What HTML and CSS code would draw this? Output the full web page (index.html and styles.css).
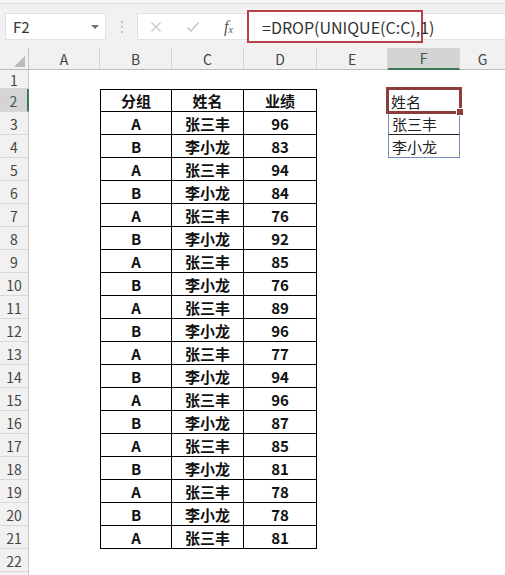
FILE: index.html
```html
<!DOCTYPE html>
<html lang="zh-CN">
<head>
<meta charset="utf-8">
<title>DROP UNIQUE</title>
<link rel="stylesheet" href="styles.css">
</head>
<body>
<div class="ribbon-edge"></div>
<div class="toolbar">
  <div class="namebox"><span class="nb-text">F2</span><span class="nb-arrow"></span></div>
  <div class="dots"><i></i><i></i><i></i></div>
  <div class="fbar">
    <div class="fbtns">
      <svg class="ico" width="12" height="12" viewBox="0 0 12 12"><path d="M1.5 1.5 L10.5 10.5 M10.5 1.5 L1.5 10.5" stroke="#c8c8c8" stroke-width="1.4" fill="none"/></svg>
      <svg class="ico" width="14" height="12" viewBox="0 0 14 12"><path d="M1.5 6.5 L5 10 L12.5 1.5" stroke="#c8c8c8" stroke-width="1.6" fill="none"/></svg>
      <span class="fx">f<sub>x</sub></span>
    </div>
    <div class="finput">=DROP(UNIQUE(C:C),1)</div>
  </div>
</div>

<div class="sheet">
  <div class="corner"><span class="tri"></span></div>
  <div class="ch">A</div><div class="ch">B</div><div class="ch">C</div><div class="ch">D</div><div class="ch">E</div><div class="ch sel">F</div><div class="ch last">G</div>

  <div class="rh">1</div><div></div><div></div><div></div><div></div><div></div><div></div><div></div>

  <div class="rh sel">2</div><div></div><div class="t l top">分组</div><div class="t top">姓名</div><div class="t top">业绩</div><div></div><div class="f active">姓名</div><div></div>

  <div class="rh">3</div><div></div><div class="t l">A</div><div class="t">张三丰</div><div class="t">96</div><div></div><div class="f spill mid">张三丰</div><div></div>
  <div class="rh">4</div><div></div><div class="t l">B</div><div class="t">李小龙</div><div class="t">83</div><div></div><div class="f spill end">李小龙</div><div></div>
  <div class="rh">5</div><div></div><div class="t l">A</div><div class="t">张三丰</div><div class="t">94</div><div></div><div></div><div></div>
  <div class="rh">6</div><div></div><div class="t l">B</div><div class="t">李小龙</div><div class="t">84</div><div></div><div></div><div></div>
  <div class="rh">7</div><div></div><div class="t l">A</div><div class="t">张三丰</div><div class="t">76</div><div></div><div></div><div></div>
  <div class="rh">8</div><div></div><div class="t l">B</div><div class="t">李小龙</div><div class="t">92</div><div></div><div></div><div></div>
  <div class="rh">9</div><div></div><div class="t l">A</div><div class="t">张三丰</div><div class="t">85</div><div></div><div></div><div></div>
  <div class="rh">10</div><div></div><div class="t l">B</div><div class="t">李小龙</div><div class="t">76</div><div></div><div></div><div></div>
  <div class="rh">11</div><div></div><div class="t l">A</div><div class="t">张三丰</div><div class="t">89</div><div></div><div></div><div></div>
  <div class="rh">12</div><div></div><div class="t l">B</div><div class="t">李小龙</div><div class="t">96</div><div></div><div></div><div></div>
  <div class="rh">13</div><div></div><div class="t l">A</div><div class="t">张三丰</div><div class="t">77</div><div></div><div></div><div></div>
  <div class="rh">14</div><div></div><div class="t l">B</div><div class="t">李小龙</div><div class="t">94</div><div></div><div></div><div></div>
  <div class="rh">15</div><div></div><div class="t l">A</div><div class="t">张三丰</div><div class="t">96</div><div></div><div></div><div></div>
  <div class="rh">16</div><div></div><div class="t l">B</div><div class="t">李小龙</div><div class="t">87</div><div></div><div></div><div></div>
  <div class="rh">17</div><div></div><div class="t l">A</div><div class="t">张三丰</div><div class="t">85</div><div></div><div></div><div></div>
  <div class="rh">18</div><div></div><div class="t l">B</div><div class="t">李小龙</div><div class="t">81</div><div></div><div></div><div></div>
  <div class="rh">19</div><div></div><div class="t l">A</div><div class="t">张三丰</div><div class="t">78</div><div></div><div></div><div></div>
  <div class="rh">20</div><div></div><div class="t l">B</div><div class="t">李小龙</div><div class="t">78</div><div></div><div></div><div></div>
  <div class="rh">21</div><div></div><div class="t l">A</div><div class="t">张三丰</div><div class="t">81</div><div></div><div></div><div></div>
  <div class="rh">22</div><div></div><div></div><div></div><div></div><div></div><div></div><div></div>
  <div class="rh"></div><div></div><div></div><div></div><div></div><div></div><div></div><div></div>
</div>
</body>
</html>
```

FILE: styles.css
```css
* { box-sizing: border-box; }
html, body { margin: 0; padding: 0; }
body {
  width: 505px;
  height: 575px;
  overflow: hidden;
  background: #ffffff;
  font-family: "Noto Sans CJK SC", "Noto Sans", sans-serif;
  color: #222;
}

.ribbon-edge {
  height: 4px;
  background: #f7f7f7;
  border-bottom: 1px solid #d9d9d9;
}

.toolbar {
  height: 44px;
  background: #f1f1f1;
  display: flex;
  align-items: flex-start;
  padding-top: 9px;
}

.namebox {
  margin-left: 5px;
  width: 101px;
  height: 27px;
  background: #fff;
  border: 1px solid #e2e2e2;
  display: flex;
  align-items: center;
  justify-content: space-between;
  padding: 0 6px 0 7px;
}
.nb-text { font-size: 15px; color: #333; line-height: 1; }
.nb-arrow {
  width: 0; height: 0;
  border-left: 4px solid transparent;
  border-right: 4px solid transparent;
  border-top: 4px solid #707070;
}

.dots {
  width: 31px;
  height: 27px;
  display: flex;
  flex-direction: column;
  align-items: center;
  justify-content: center;
  gap: 3px;
}
.dots i {
  display: block;
  width: 2px; height: 2px;
  background: #c4c4c4;
}

.fbar {
  flex: 1;
  height: 27px;
  background: #fff;
  border: 1px solid #e2e2e2;
  border-right: none;
  display: flex;
  align-items: center;
}
.fbtns {
  width: 109px;
  display: flex;
  align-items: center;
  padding-left: 12px;
  gap: 24px;
}
.ico { display: block; }
.fx {
  font-family: "Liberation Serif", "DejaVu Serif", serif;
  font-style: italic;
  font-size: 16px;
  color: #555;
  margin-left: 0;
  line-height: 1;
}
.fx sub { font-size: 10px; vertical-align: -1px; }

.finput {
  width: 176px;
  height: 33px;
  margin: -3px 0;
  border: 2px solid #b5424b;
  display: flex;
  align-items: center;
  padding-left: 13px;
  font-size: 16px;
  color: #333;
  background: #fff;
}

.sheet {
  display: grid;
  grid-template-columns: 29px 71px 72px 72px 73px 71px 72px 1fr;
  grid-template-rows: 22px 19px repeat(21, 23px) 23px;
}

.corner {
  background: #f1f1f1;
  border-right: 1px solid #c6c6c6;
  border-bottom: 1px solid #bdbdbd;
  display: flex;
  align-items: flex-end;
  justify-content: flex-end;
  padding: 0 3px 2px 0;
}
.tri {
  width: 0; height: 0;
  border-left: 11px solid transparent;
  border-bottom: 11px solid #b9b9b9;
}

.ch {
  background: #f1f1f1;
  border-right: 1px solid #d6d6d6;
  border-bottom: 1px solid #bdbdbd;
  display: flex;
  align-items: center;
  justify-content: center;
  font-size: 14px;
  color: #444;
}
.ch.last { border-right: none; }
.ch.sel {
  background: #d4d4d4;
  border-bottom: 2px solid #3e7a55;
  color: #3a5a45;
}

.rh {
  background: #f1f1f1;
  border-right: 1px solid #c6c6c6;
  border-bottom: 1px solid #d9d9d9;
  display: flex;
  align-items: center;
  justify-content: center;
  font-size: 14px;
  color: #444;
  padding-top: 1px;
}
.rh.sel {
  background: #d4d4d4;
  border-right: 2px solid #3e7a55;
  color: #3a5a45;
}

.t {
  border-right: 1px solid #000;
  border-bottom: 1px solid #000;
  display: flex;
  align-items: center;
  justify-content: center;
  font-size: 15px;
  font-weight: 700;
  color: #111;
}
.t.l { border-left: 1px solid #000; }
.t.top { border-top: 1px solid #000; }

.f {
  font-size: 15px;
  color: #222;
  display: flex;
  align-items: flex-end;
  padding: 0 0 0 3px;
  line-height: 20px;
}
.f.active { position: relative; }
.f.active::after {
  content: "";
  position: absolute;
  left: -2px; top: -2px; right: -2px; bottom: -2px;
  border: 3px solid #8b3d3d;
  z-index: 1;
}
.f.active::before {
  content: "";
  position: absolute;
  right: -4px; bottom: -4px;
  width: 6px; height: 6px;
  background: #8b3d3d;
  border: 1px solid #fff;
  z-index: 2;
}
.f.spill {
  border-left: 1px solid #7290bd;
  border-right: 1px solid #7290bd;
}
.f.mid { border-bottom: 1px solid #222; }
.f.end { border-bottom: 1px solid #7290bd; }
```
